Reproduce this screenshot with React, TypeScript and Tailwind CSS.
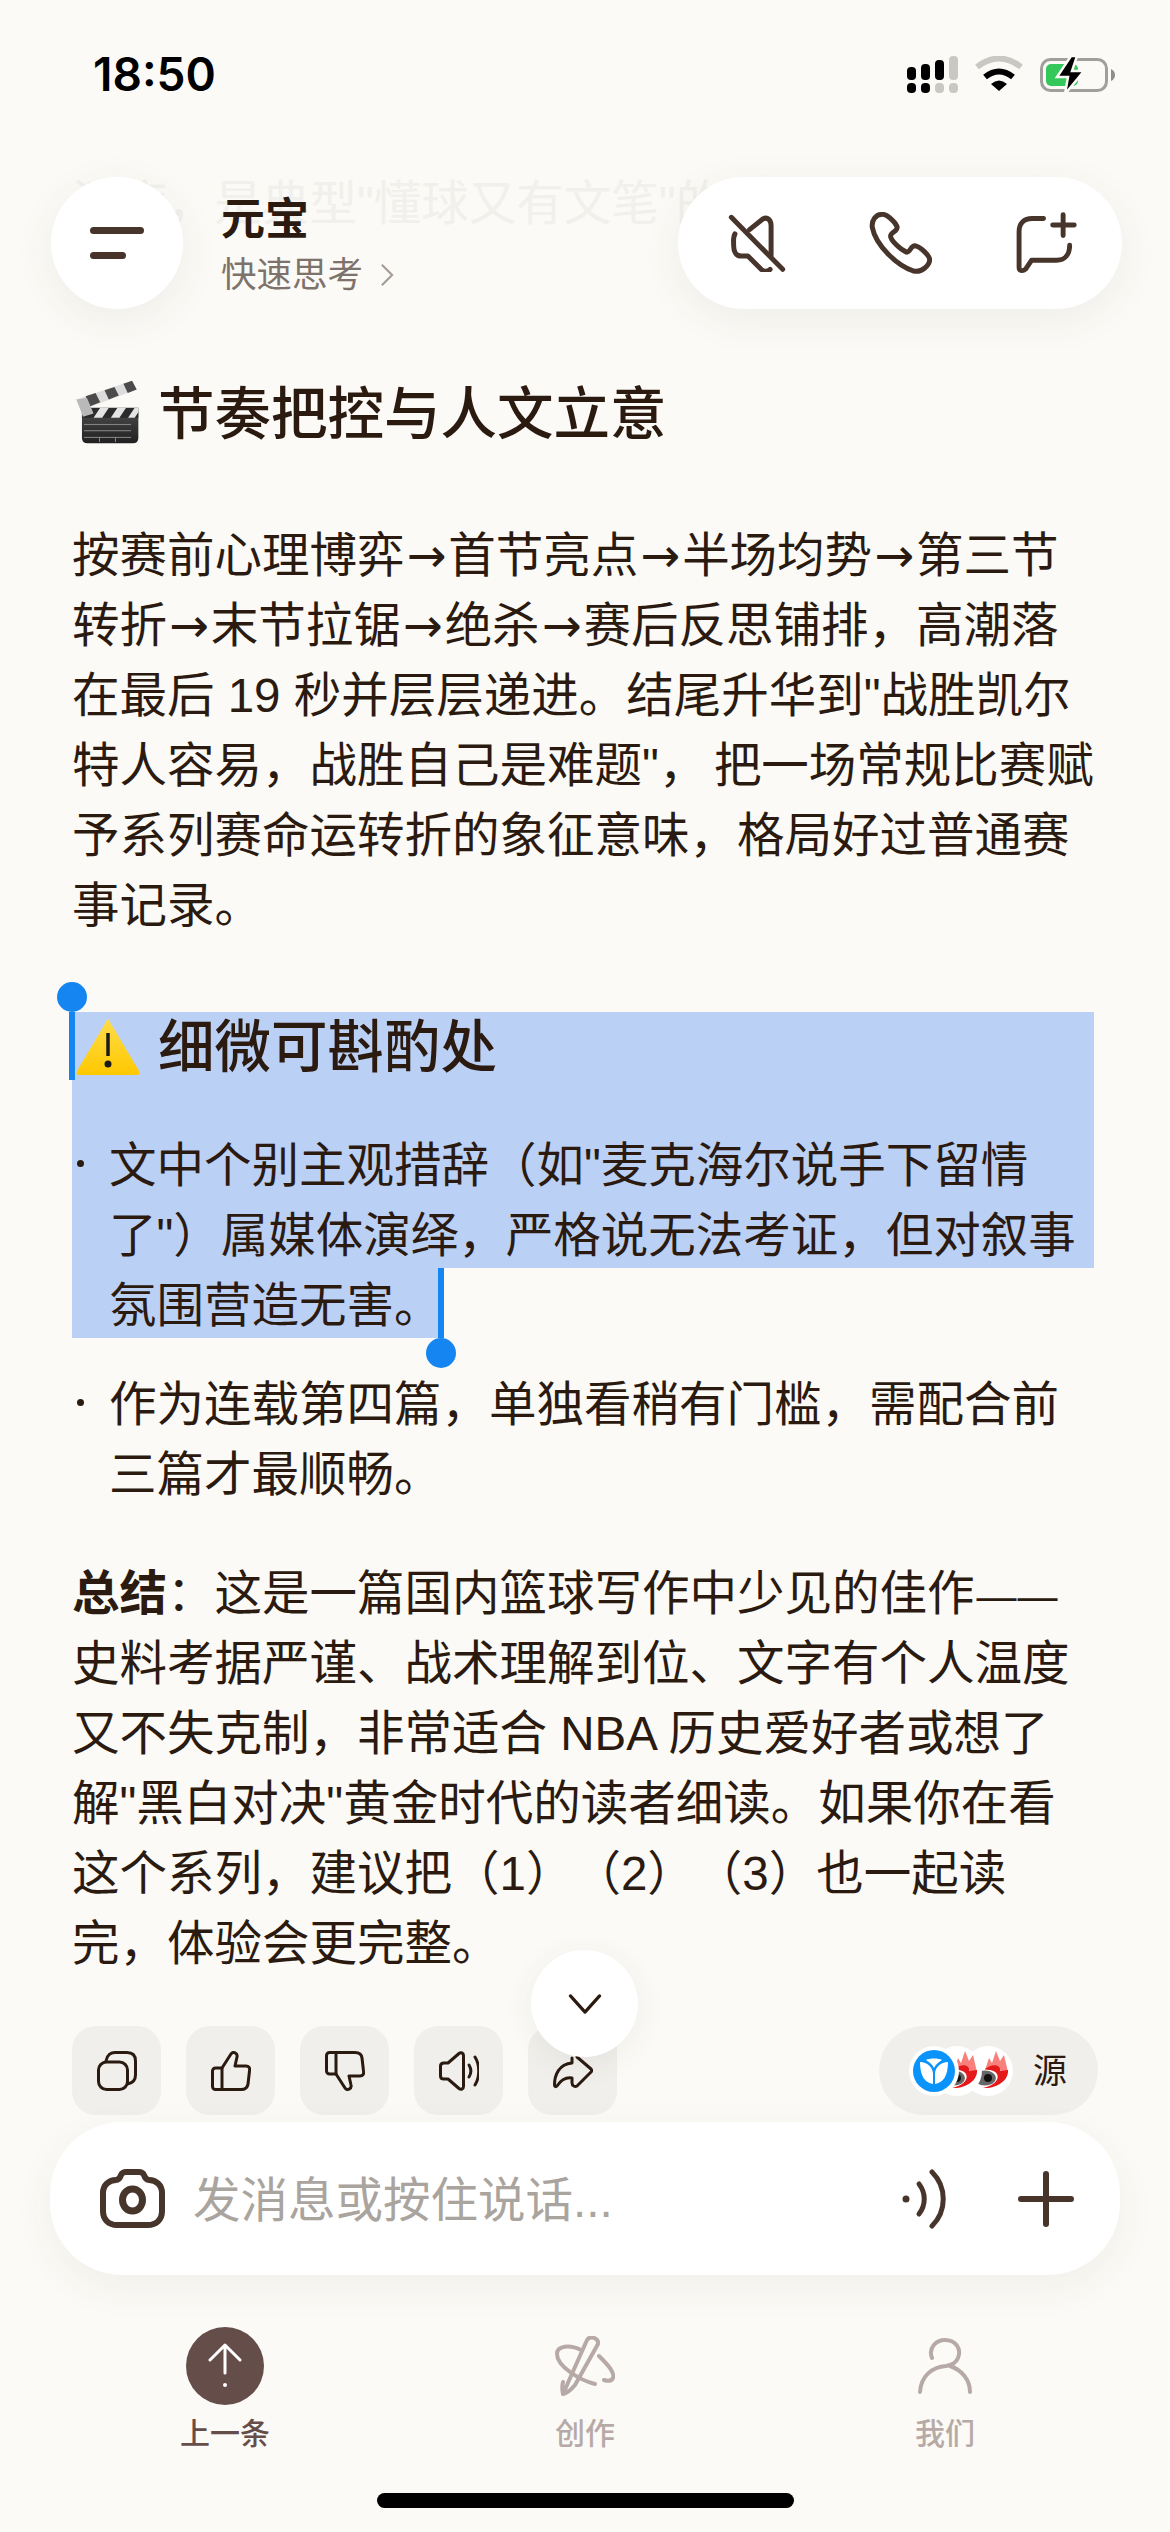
const intro = [
  '按赛前心理博弈→首节亮点→半场均势→第三节',
  '转折→末节拉锯→绝杀→赛后反思铺排，高潮落',
  '在最后 19 秒并层层递进。结尾升华到"战胜凯尔',
  '特人容易，战胜自己是难题"，把一场常规比赛赋',
  '予系列赛命运转折的象征意味，格局好过普通赛',
  '事记录。',
]

const summary = [
  '史料考据严谨、战术理解到位、文字有个人温度',
  '又不失克制，非常适合 NBA 历史爱好者或想了',
  '解"黑白对决"黄金时代的读者细读。如果你在看',
  '这个系列，建议把（1）（2）（3）也一起读',
  '完，体验会更完整。',
]

// arrows are wider than the Liberation ones, and the comma after a quote gets squeezed
function Line({ text }: { text: string }) {
  const parts = text.split(/(→|"，)/)
  return (
    <div className="relative top-[3px]">
      {parts.map((part, i) => {
        if (part === '→') {
          return <span key={i} className="px-[2px] font-['DejaVu_Sans']">→</span>
        }
        if (part === '"，') {
          return (
            <span key={i}>
              "<span className="inline-block w-[55px]">，</span>
            </span>
          )
        }
        return <span key={i}>{part}</span>
      })}
    </div>
  )
}

function Bullet() {
  return (
    <span className="absolute left-[5px] top-[32px] size-[7px] rounded-full bg-[#2b1a10]" />
  )
}

function Clapper() {
  return (
    <svg viewBox="70 25 205 205" className="size-[68px] shrink-0">
      <defs>
        <linearGradient id="board" x1="0" y1="0" x2="0" y2="1">
          <stop offset="0" stopColor="#4a4a4a" />
          <stop offset="1" stopColor="#1f1f1f" />
        </linearGradient>
      </defs>
      <path d="M97 125 H267 V205 Q267 222 250 222 H114 Q97 222 97 205 Z" fill="url(#board)" />
      <path d="M97 115 H267 V145 H97 Z" fill="#2b2b2b" />
      <path d="M132 145 L152 115 H178 L158 145 Z M184 145 L204 115 H230 L210 145 Z M236 145 L256 115 H267 V128 L256 145 Z" fill="#e4e4e4" />
      <path d="M103 165 H245 M103 184 H245 M103 204 H245 M150 204 V218 M198 204 V218" stroke="#8a8a8a" strokeWidth="3" />
      <path d="M80 90 L248 33 L262 60 L100 120 Z" fill="#dcdcdc" />
      <path d="M108 80 L138 70 L152 98 L122 110 Z M165 62 L195 52 L208 78 L178 90 Z M222 42 L248 33 L262 60 L235 70 Z" fill="#4b4b4b" />
      <path d="M80 90 L112 85 L132 132 L100 142 L92 120 Z" fill="#b9b9b9" />
    </svg>
  )
}

function WarningIcon() {
  return (
    <svg viewBox="0 0 64 58" className="h-[58px] w-[64px] shrink-0">
      <defs>
        <linearGradient id="warn" x1="0" y1="0" x2="0" y2="1">
          <stop offset="0" stopColor="#ffdc4a" />
          <stop offset="1" stopColor="#ffc800" />
        </linearGradient>
      </defs>
      <path d="M32 1 Q33 1 34 4 L63 53 Q65 57 60 57 H4 Q-1 57 1 53 L30 4 Q31 1 32 1 Z" fill="url(#warn)" />
      <path d="M32 15 V38" stroke="#1a1a1a" strokeWidth="3.5" />
      <circle cx="32" cy="46" r="3.5" fill="#1a1a1a" />
    </svg>
  )
}

function WeiboIcon() {
  return (
    <svg viewBox="0 0 50 50" className="size-[50px]">
      <circle cx="25" cy="25" r="25" fill="#fff" />
      <path d="M22 24 L26 12 L29 17 L33 5 L37 15 L41 9 L45 26 L34 24 Z" fill="#f8807c" />
      <path d="M22 23 C32 16 38 20 37 25 L45 24 C46 34 34 43 20 42 C30 40 37 34 34 28 C32 24 26 24 22 23 Z" fill="#e5191c" />
      <ellipse cx="22" cy="32" rx="11" ry="7.5" fill="#666" />
      <circle cx="25" cy="32" r="4" fill="#111" />
    </svg>
  )
}

const iconLine = 'fill-none stroke-[#47352b] [stroke-linecap:round] [stroke-linejoin:round]'
const actionLine = 'size-[40px] fill-none stroke-[#2b1a10] stroke-[3] [stroke-linecap:round] [stroke-linejoin:round]'

function ActionButton({ children }: { children: React.ReactNode }) {
  return (
    <div className="flex size-[89px] items-center justify-center rounded-[24px] bg-[#f0efeb]">
      {children}
    </div>
  )
}

export default function App() {
  return (
    <div className="relative flex h-[2532px] w-[1170px] flex-col overflow-hidden bg-[#fbfaf6] font-['Liberation_Sans','Noto_Sans_CJK_SC',sans-serif] text-[#2b1a10] [text-spacing-trim:space-all]">
      {/* status bar */}
      <div className="flex h-[177px] shrink-0 items-start justify-between pl-[93px] pr-[55px] pt-[48px]">
        <span className="font-['Inter',sans-serif] text-[46px] font-semibold leading-[52px] text-black">18:50</span>
        <div className="flex items-start gap-[17px] pt-[8px]">
          <svg viewBox="0 0 51 37" className="h-[37px] w-[51px]">
            <rect x="0" y="11" width="9" height="13" rx="4" fill="#000" />
            <rect x="14" y="8" width="9" height="16" rx="4" fill="#000" />
            <rect x="28" y="4" width="9" height="20" rx="4" fill="#000" />
            <rect x="42" y="0" width="9" height="24" rx="4" fill="#c9c8c3" />
            <rect x="0" y="27" width="9" height="10" rx="4" fill="#000" />
            <rect x="14" y="27" width="9" height="10" rx="4" fill="#000" />
            <rect x="28" y="27" width="9" height="10" rx="4" fill="#c9c8c3" />
            <rect x="42" y="27" width="9" height="10" rx="4" fill="#c9c8c3" />
          </svg>
          <svg viewBox="0 0 48 35" className="h-[35px] w-[48px]">
            <path d="M2 11 Q24 -6 46 11" fill="none" stroke="#c9c8c3" strokeWidth="6" />
            <path d="M10 21 Q24 10 38 21" fill="none" stroke="#000" strokeWidth="6" />
            <path d="M16 28 Q24 21 32 28 L24 35 Z" fill="#000" />
          </svg>
          <svg viewBox="0 0 75 38" className="h-[38px] w-[75px]">
            <rect x="1.5" y="3.5" width="65" height="31" rx="9" fill="none" stroke="#a19f9b" strokeWidth="3" />
            <rect x="6" y="8" width="32" height="22" rx="5" fill="#34c759" />
            <path d="M71 13 Q75 15 75 19 Q75 23 71 25 Z" fill="#8e8d89" />
            <path d="M31 0 L17 21 H28 L25 38 L44 15 H32 L37 0 Z" fill="#000" stroke="#fbfaf6" strokeWidth="2.5" />
          </svg>
        </div>
      </div>

      {/* text that has scrolled under the header */}
      <div className="absolute left-[72px] top-[169px] whitespace-nowrap text-[47.5px] leading-[70px] text-[#f1f0ec]">
        深度，是典型"懂球又有文笔"的
      </div>

      {/* header */}
      <div className="relative z-10 flex h-[132px] shrink-0 items-center justify-between pl-[51px] pr-[48px]">
        <div className="flex items-center gap-[38px]">
          <div className="flex size-[132px] flex-col items-start justify-center gap-[18px] rounded-full bg-white pl-[39px] shadow-[0_10px_40px_rgba(90,70,50,0.07)]">
            <span className="h-[7px] w-[54px] rounded-full bg-[#47352b]" />
            <span className="h-[7px] w-[36px] rounded-full bg-[#47352b]" />
          </div>
          <div className="relative top-[3px] flex flex-col gap-[8px]">
            <span className="text-[44px] font-semibold leading-[50px]">元宝</span>
            <div className="flex items-center gap-[17px] text-[35.5px] leading-[44px] text-[#7e736c]">
              <span>快速思考</span>
              <svg viewBox="0 0 16 28" className="h-[24px] w-[14px] fill-none stroke-[#a59c96] stroke-[2.5]">
                <path d="M2 2 L14 14 L2 26" />
              </svg>
            </div>
          </div>
        </div>
        <div className="flex h-[132px] w-[444px] items-center justify-between rounded-[66px] bg-white pl-[50px] pr-[45px] shadow-[0_10px_40px_rgba(90,70,50,0.07)]">
          <svg viewBox="85 65 175 175" className={`size-[58px] stroke-[15] ${iconLine}`}>
            <path d="M95 75 L250 232" />
            <path d="M150 112 L190 80 C205 72 215 85 215 100 V190" />
            <path d="M106 125 C100 135 102 145 102 160 C102 180 110 192 125 192 H145 L185 232 C195 240 205 238 212 232" />
          </svg>
          <svg viewBox="505 65 190 190" className={`size-[63px] stroke-[15] ${iconLine}`}>
            <path d="M545 72 C525 72 512 90 515 112 C525 165 590 228 640 243 C665 248 688 225 688 208 C686 195 660 170 645 167 C630 165 630 188 618 186 C600 178 570 150 570 138 C570 125 590 125 590 110 C585 95 560 72 545 72 Z" />
          </svg>
          <svg viewBox="945 60 185 190" className={`size-[62px] stroke-[15] ${iconLine}`}>
            <path d="M1030 80 H995 C970 80 955 95 955 120 V230 C955 240 965 243 975 235 L993 208 H1070 C1095 208 1110 190 1110 162" />
            <path d="M1090 68 V132 M1058 100 H1124" />
          </svg>
        </div>
      </div>

      {/* message */}
      <div className="relative shrink-0 px-[72px] text-[47.5px] leading-[70px] whitespace-nowrap">
        <div className="mt-[68px] flex h-[70px] items-center text-[56.5px] font-medium">
          <span className="mr-[17px] ml-[1px]"><Clapper /></span>
          <span className="relative top-[3px]">节奏把控与人文立意</span>
        </div>
        <div className="mt-[71px]">
          {intro.map((line) => (
            <Line key={line} text={line} />
          ))}
        </div>

        {/* selected range */}
        <div className="relative mt-[74px]">
          <div className="w-[1022px] bg-[#bbd0f5]">
            <div className="flex h-[70px] items-center text-[56.5px] font-medium">
              <span className="ml-[4px] mr-[18px]"><WarningIcon /></span>
              <span className="relative top-[1px]">细微可斟酌处</span>
            </div>
            <div className="relative mt-[46px] pl-[37px]">
              <Bullet />
              <Line text={'文中个别主观措辞（如"麦克海尔说手下留情'} />
              <Line text={'了"）属媒体演绎，严格说无法考证，但对叙事'} />
            </div>
          </div>
          <div className="w-[368px] bg-[#bbd0f5] pl-[37px]">
            <Line text="氛围营造无害。" />
          </div>

          <div className="absolute left-[-3px] top-0 h-[68px] w-[6px] bg-[#1585f2]" />
          <div className="absolute left-[-15px] top-[-30px] size-[30px] rounded-full bg-[#1585f2]" />
          <div className="absolute left-[366px] top-[256px] h-[70px] w-[6px] bg-[#1585f2]" />
          <div className="absolute left-[354px] top-[326px] size-[30px] rounded-full bg-[#1585f2]" />
        </div>

        <div className="relative mt-[29px] pl-[37px]">
          <Bullet />
          <Line text="作为连载第四篇，单独看稍有门槛，需配合前" />
          <Line text="三篇才最顺畅。" />
        </div>

        <div className="mt-[49px]">
          <div className="relative top-[3px] h-[70px]">
            <span className="font-bold">总结</span>：这是一篇国内篮球写作中少见的佳作
            <span className="ml-[2px] text-[40px] tracking-[1px]">——</span>
          </div>
          {summary.map((line) => (
            <Line key={line} text={line} />
          ))}
        </div>

        {/* actions */}
        <div className="mt-[50px] flex items-center justify-between">
          <div className="flex gap-[25px]">
            <ActionButton>
              <svg viewBox="0 0 40 40" className={actionLine}>
                <rect x="1.5" y="11" width="29" height="27.5" rx="8" />
                <path d="M9 10 C10 4 14 1.5 18 1.5 H30 C36 1.5 38.5 5 38.5 10 V24 C38.5 29 36 32 30.5 33" />
              </svg>
            </ActionButton>
            <ActionButton>
              <svg viewBox="0 0 40 40" className={actionLine}>
                <path d="M1.5 20 A3 3 0 0 1 4.5 17 H11 V38.5 H4.5 A3 3 0 0 1 1.5 35.5 Z" />
                <path d="M11 17 L20 3 C22 0 27 2 26 6 L24 15 H35 C38 15 39 17 38.5 20 L37 33 C36.5 37 34 38.5 30 38.5 H11" />
              </svg>
            </ActionButton>
            <ActionButton>
              <svg viewBox="0 0 40 40" className={`${actionLine} -scale-y-100`}>
                <path d="M1.5 20 A3 3 0 0 1 4.5 17 H11 V38.5 H4.5 A3 3 0 0 1 1.5 35.5 Z" />
                <path d="M11 17 L20 3 C22 0 27 2 26 6 L24 15 H35 C38 15 39 17 38.5 20 L37 33 C36.5 37 34 38.5 30 38.5 H11" />
              </svg>
            </ActionButton>
            <ActionButton>
              <svg viewBox="0 0 40 40" className={actionLine}>
                <path d="M1.5 15 C1.5 13 3 12 5 12 H9 L20 2.5 C22 1 24.5 2 24.5 4.5 V35.5 C24.5 38 22 39 20 37.5 L9 28 H5 C3 28 1.5 27 1.5 25 Z" />
                <path d="M30 14 C32.5 18 32.5 22 30 26" />
                <path d="M36 6 C41 14 41 26 36 34" />
              </svg>
            </ActionButton>
            <ActionButton>
              <svg viewBox="0 0 40 40" className={actionLine}>
                <path d="M24 6 L38 18 C39 19 39 20 38 21 L24 35 C22 36 19 35 19 32 V27 C12 26 8 29 4 35 C3 36 1.5 36 1.5 34 C1.5 24 6 13 19 12 V7" />
              </svg>
            </ActionButton>
          </div>
          <div className="flex h-[89px] w-[219px] items-center rounded-full bg-[#f0efeb] pl-[30px]">
            <div className="flex items-center">
              <div className="relative z-30 flex size-[50px] items-center justify-center rounded-full bg-white">
                <svg viewBox="0 0 42 42" className="size-[42px]">
                  <circle cx="21" cy="21" r="21" fill="#0a93fb" />
                  <path d="M7 12 C14 12 20 17 20 24 V34 C12 33 7 26 7 12 Z M35 12 C28 12 22 17 22 24 V34 C30 33 35 26 35 12 Z M13 10 C16 8 26 8 29 10 C26 12 23 14 21 18 C19 14 16 12 13 10 Z" fill="#fff" />
                </svg>
              </div>
              <div className="relative z-20 -ml-[27px]"><WeiboIcon /></div>
              <div className="relative z-10 -ml-[19px]"><WeiboIcon /></div>
            </div>
            <span className="ml-[20px] text-[34px] leading-[44px]">源</span>
          </div>
        </div>
      </div>

      <div className="absolute left-[531px] top-[1950px] z-20 flex size-[107px] items-center justify-center rounded-full bg-white shadow-[0_6px_30px_rgba(90,70,50,0.07)]">
        <svg viewBox="0 0 36 22" className="h-[20px] w-[34px] fill-none stroke-[#2b1a10] stroke-[3.5] [stroke-linecap:round] [stroke-linejoin:round]">
          <path d="M2 2 L18 20 L34 2" />
        </svg>
      </div>

      {/* input */}
      <div className="relative z-10 mx-[50px] mt-[7px] flex h-[153px] shrink-0 items-center rounded-[72px] bg-white pl-[50px] pr-[46px] shadow-[0_12px_40px_rgba(90,70,50,0.06)]">
        <svg viewBox="0 0 65 59" className={`h-[59px] w-[65px] stroke-[6] ${iconLine}`}>
          <path d="M3 24 C3 16 9 11 16 11 C19 11 20 9 21 6 C22 4 24 3 26 3 H39 C41 3 43 4 44 6 C45 9 46 11 49 11 C56 11 62 16 62 24 V42 C62 51 56 56 48 56 H17 C9 56 3 51 3 42 Z" />
          <ellipse cx="32.5" cy="31" rx="10" ry="11" strokeWidth="7" />
        </svg>
        <span className="relative top-[2px] ml-[28px] text-[47.5px] leading-[60px] text-[#aaa49e]">发消息或按住说话...</span>
        <div className="ml-auto flex items-center gap-[70px]">
          <svg viewBox="0 0 46 60" className={`h-[60px] w-[46px] stroke-[5] ${iconLine}`}>
            <circle cx="4" cy="30" r="3.5" fill="#47352b" stroke="none" />
            <path d="M17 15 C24 24 24 36 17 45" />
            <path d="M30 3 C45 18 45 42 30 57" />
          </svg>
          <svg viewBox="0 0 56 56" className={`size-[56px] stroke-[6] ${iconLine}`}>
            <path d="M28 3 V53 M3 28 H53" />
          </svg>
        </div>
      </div>

      {/* tab bar */}
      <div className="mx-[45px] mt-[52px] grid shrink-0 grid-cols-3 text-[30px] font-medium leading-[40px]">
        <div className="flex flex-col items-center gap-[9px] text-[#654e4a]">
          <div className="flex size-[78px] items-center justify-center rounded-full bg-[#654e4a]">
            <svg viewBox="0 0 34 46" className="h-[46px] w-[34px] fill-none stroke-white stroke-[3] [stroke-linecap:round] [stroke-linejoin:round]">
              <path d="M17 2 V30 M2 17 L17 2 L32 17" />
              <circle cx="17" cy="42" r="2" fill="#fff" stroke="none" />
            </svg>
          </div>
          <span>上一条</span>
        </div>
        <div className="flex flex-col items-center gap-[9px] text-[#b7aaa6]">
          <div className="flex h-[78px] items-center">
            <svg viewBox="0 0 60 60" className="size-[60px] fill-none stroke-[#b7aaa6] stroke-[4] [stroke-linecap:round] [stroke-linejoin:round]">
              <path d="M8 58 L32 4 C35 -1 44 2 43 8 L20 49 C16 54 12 57 8 58 C7 54 7 50 8 46" />
              <path d="M26 14 C14 8 2 10 2 18 C2 30 24 44 40 48" />
              <path d="M44 20 C52 28 60 36 58 42 C56 46 52 45 49 44" />
            </svg>
          </div>
          <span>创作</span>
        </div>
        <div className="flex flex-col items-center gap-[9px] text-[#b7aaa6]">
          <div className="flex h-[78px] items-center">
            <svg viewBox="0 0 54 56" className="h-[56px] w-[54px] fill-none stroke-[#b7aaa6] stroke-[4] [stroke-linecap:round] [stroke-linejoin:round]">
              <path d="M14 20 C10 10 18 2 27 2 C37 2 44 10 40 20 C38 25 34 27 28 28 C14 29 3 38 2 54" />
              <path d="M32 28 C44 32 52 42 52 54" />
            </svg>
          </div>
          <span>我们</span>
        </div>
      </div>

      <div className="absolute bottom-[24px] left-[377px] h-[15px] w-[417px] rounded-full bg-black" />
    </div>
  )
}
